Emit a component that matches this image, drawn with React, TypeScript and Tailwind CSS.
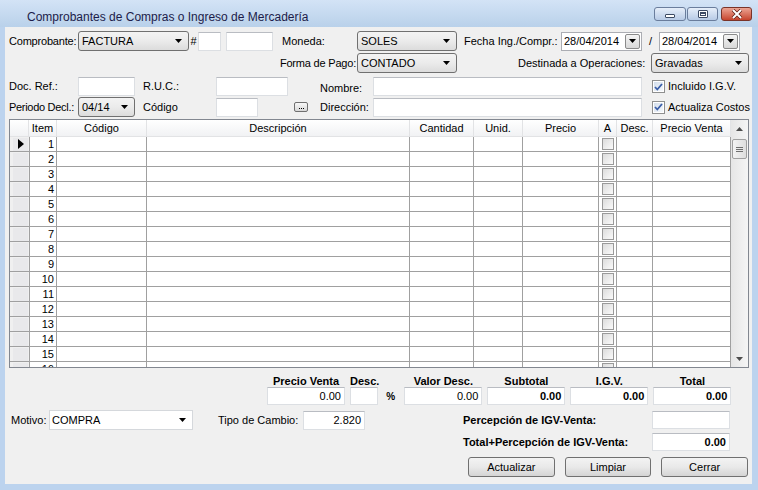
import React from 'react';

const Arrow = ({ up = false, color = '#000' }: { up?: boolean; color?: string }) => (
  <svg width="7" height="4" viewBox="0 0 7 4">
    <path d={up ? 'M0 4h7L3.5 0z' : 'M0 0h7L3.5 4z'} fill={color} />
  </svg>
);

const Combo = ({ value, className = '' }: { value: string; className?: string }) => (
  <div
    className={`h-[20px] rounded-[3px] border border-[#707070] bg-linear-to-b from-[#f3f3f3] via-[#ebebeb] to-[#dcdcdc] flex items-center pl-[3px] pr-[6px] ${className}`}
  >
    <span className="flex-1 text-[11px] leading-none">{value}</span>
    <Arrow />
  </div>
);

const Field = ({
  value = '',
  bold = false,
  className = '',
}: {
  value?: string;
  bold?: boolean;
  className?: string;
}) => (
  <div
    className={`bg-white border border-[#dcdfe3] border-t-[#b9bcc2] flex items-center justify-end pr-[3px] text-[11px] leading-none ${
      bold ? 'font-bold' : ''
    } ${className}`}
  >
    {value}
  </div>
);

const DateBox = ({ value }: { value: string }) => (
  <div className="w-[81px] h-[19px] border border-[#abadb3] bg-white flex items-center">
    <span className="flex-1 pl-[2px] text-[11px] leading-none">{value}</span>
    <div className="w-[15px] h-[15px] mr-[1px] border border-[#8a8a8a] rounded-[2px] bg-linear-to-b from-[#f4f4f4] to-[#d8d8d8] flex items-center justify-center">
      <Arrow />
    </div>
  </div>
);

const Check = ({ checked = true }: { checked?: boolean }) => (
  <div className="w-[13px] h-[13px] border border-[#8e8f8f] bg-white p-[1px]">
    <div className="w-full h-full bg-linear-to-br from-[#d3deec] to-[#f5f8fb] flex items-center justify-center">
      {checked && (
        <svg width="9" height="8" viewBox="0 0 9 8">
          <path d="M1 4l2.3 2.5L8 1" stroke="#3a5ea8" strokeWidth="1.8" fill="none" />
        </svg>
      )}
    </div>
  </div>
);

const CellCheck = () => (
  <div className="w-[12px] h-[12px] border border-[#9a9a9a] bg-linear-to-br from-[#dcdcdc] to-[#fbfbfb]" />
);

const Btn = ({ label }: { label: string }) => (
  <div className="w-[87px] h-[20px] rounded-[3px] border border-[#707070] bg-linear-to-b from-[#f3f3f3] via-[#e9e9e9] to-[#d4d4d4] flex items-center justify-center text-[11px]">
    {label}
  </div>
);

const columns = [
  { key: 'item', label: 'Item', w: 'w-[28px]' },
  { key: 'cod', label: 'Código', w: 'w-[90px]' },
  { key: 'desc', label: 'Descripción', w: 'w-[263px]' },
  { key: 'cant', label: 'Cantidad', w: 'w-[64px]' },
  { key: 'unid', label: 'Unid.', w: 'w-[49px]' },
  { key: 'precio', label: 'Precio', w: 'w-[76px]' },
  { key: 'a', label: 'A', w: 'w-[18px]' },
  { key: 'dsc', label: 'Desc.', w: 'w-[36px]' },
  { key: 'pv', label: 'Precio Venta', w: 'w-[78px]' },
];

const rows = Array.from({ length: 16 }, (_, i) => i + 1);

const totals = [
  { label: 'Precio Venta', value: '0.00', w: 'w-[78px]', bold: false },
  { label: 'Desc.', value: '', w: 'w-[28px]', bold: false },
];

const totals2 = [
  { label: 'Valor Desc.', value: '0.00', bold: false },
  { label: 'Subtotal', value: '0.00', bold: true },
  { label: 'I.G.V.', value: '0.00', bold: true },
  { label: 'Total', value: '0.00', bold: true },
];

export default function App() {
  return (
    <div className="w-[758px] h-[490px] bg-[#bcd3ee] flex flex-col font-['Liberation_Sans',Arial,sans-serif] text-black overflow-hidden">
      {/* title bar */}
      <div className="h-[27px] flex bg-linear-to-b from-[#d3e3f6] to-[#b9d1ea]">
        <div className="pl-[27px] pt-[8px] text-[12px] text-[#1c1c4a]">
          Comprobantes de Compras o Ingreso de Mercadería
        </div>
        <div className="ml-auto mr-[6px] mt-[7px] flex gap-[1px] h-[14px]">
          <div className="w-[32px] rounded-[3px] border border-[#6a7d9c] bg-linear-to-b from-[#e6eef9] to-[#b8cbe6] flex items-end justify-center pb-[2px]">
            <div className="w-[10px] h-[4px] border border-[#3c4a63] bg-white rounded-[1px]" />
          </div>
          <div className="w-[31px] rounded-[3px] border border-[#6a7d9c] bg-linear-to-b from-[#e6eef9] to-[#b8cbe6] flex items-center justify-center">
            <div className="w-[10px] h-[8px] border border-[#3c4a63] bg-white rounded-[1px] p-[1px]">
              <div className="w-full h-full border border-[#3c4a63] border-t-2" />
            </div>
          </div>
          <div className="w-[31px] ml-[2px] rounded-[3px] border border-[#7a3328] bg-linear-to-b from-[#eba393] to-[#c5432d] flex items-center justify-center">
            <svg width="12" height="10" viewBox="0 0 12 10">
              <path d="M2 1l8 8M10 1l-8 8" stroke="#5a1a10" strokeWidth="3.4" />
              <path d="M2 1l8 8M10 1l-8 8" stroke="#fff" strokeWidth="2" />
            </svg>
          </div>
        </div>
      </div>

      {/* client area */}
      <div className="flex-1 ml-[5px] mr-[6px] mb-[6px] bg-[#f0f0f0] px-[4px] text-[11px] whitespace-nowrap flex flex-col">
        {/* row 1 */}
        <div className="mt-[4px] h-[20px] flex items-center *:shrink-0">
          <span className="w-[69px] tracking-[-0.2px]">Comprobante:</span>
          <Combo value="FACTURA" className="w-[111px]" />
          <span className="w-[9px] text-center">#</span>
          <Field className="w-[23px] h-[19px]" />
          <Field className="w-[47px] h-[19px] ml-[5px]" />
          <span className="ml-[9px] w-[75px]">Moneda:</span>
          <Combo value="SOLES" className="w-[100px]" />
          <span className="ml-[7px] w-[97px]">Fecha Ing./Compr.:</span>
          <DateBox value="28/04/2014" />
          <span className="w-[17px] text-center">/</span>
          <DateBox value="28/04/2014" />
        </div>

        {/* row 2 */}
        <div className="mt-[2px] h-[20px] flex items-center *:shrink-0">
          <span className="ml-[268px] w-[80px] text-right pr-[1px] tracking-[-0.2px]">Forma de Pago:</span>
          <Combo value="CONTADO" className="w-[100px]" />
          <span className="ml-[61px] w-[133px]">Destinada a Operaciones:</span>
          <Combo value="Gravadas" className="w-[98px]" />
        </div>

        {/* row 3 */}
        <div className="mt-[4px] h-[19px] flex items-center *:shrink-0">
          <span className="w-[69px]">Doc. Ref.:</span>
          <Field className="w-[57px] h-[19px]" />
          <span className="ml-[8px] w-[73px]">R.U.C.:</span>
          <Field className="w-[72px] h-[19px]" />
          <span className="ml-[32px] w-[53px] pt-[4px]">Nombre:</span>
          <Field className="w-[269px] h-[19px]" />
          <div className="ml-[10px]">
            <Check />
          </div>
          <span className="ml-[3px]">Incluido I.G.V.</span>
        </div>

        {/* row 4 */}
        <div className="mt-[1px] h-[20px] flex items-center *:shrink-0">
          <span className="w-[69px] tracking-[-0.3px]">Periodo Decl.:</span>
          <Combo value="04/14" className="w-[57px]" />
          <span className="ml-[8px] w-[73px]">Código</span>
          <Field className="w-[42px] h-[19px]" />
          <div className="ml-[36px] w-[14px] h-[10px] rounded-[2px] border border-[#707070] bg-linear-to-b from-[#f8f8f8] to-[#d8d8d8] flex items-end justify-center gap-[1px] pb-[2px]">
            <div className="w-px h-px bg-black" />
            <div className="w-px h-px bg-black" />
            <div className="w-px h-px bg-black" />
          </div>
          <span className="ml-[12px] w-[53px]">Dirección:</span>
          <Field className="w-[269px] h-[19px]" />
          <div className="ml-[10px]">
            <Check />
          </div>
          <span className="ml-[3px]">Actualiza Costos</span>
        </div>

        {/* grid */}
        <div className="mt-[2px] w-[740px] h-[249px] border border-[#828790] bg-white flex">
          <div className="w-[721px] overflow-hidden">
            <div className="h-[17px] flex bg-linear-to-b from-[#ffffff] to-[#f1f2f4] border-b border-[#e2e3e5]">
              <div className="w-[19px] border-r border-[#e2e3e5]" />
              {columns.map((c) => (
                <div
                  key={c.key}
                  className={`${c.w} shrink-0 border-r border-[#e2e3e5] text-center leading-[17px]`}
                >
                  {c.label}
                </div>
              ))}
            </div>
            {rows.map((r) => (
              <div key={r} className="h-[15px] flex border-b border-[#a0a0a0]">
                <div className="w-[19px] shrink-0 bg-[#f0f0f0] flex items-center justify-center pl-[2px]">
                  <div className="w-[15px] h-[13px] bg-[#e9e9eb] flex items-center justify-center">
                    {r === 1 && (
                      <svg width="6" height="10" viewBox="0 0 6 10">
                        <path d="M0 0l6 5-6 5z" fill="#000" />
                      </svg>
                    )}
                  </div>
                </div>
                {columns.map((c) => (
                  <div
                    key={c.key}
                    className={`${c.w} shrink-0 border-r border-[#a0a0a0] flex items-center ${
                      c.key === 'item' ? 'justify-end pr-[2px] border-l' : 'justify-center'
                    }`}
                  >
                    {c.key === 'item' && r}
                    {c.key === 'a' && <CellCheck />}
                  </div>
                ))}
              </div>
            ))}
          </div>
          {/* scrollbar */}
          <div className="w-[17px] bg-linear-to-r from-[#e6e6e6] to-[#f5f5f5] flex flex-col items-center">
            <div className="h-[17px] flex items-center justify-center">
              <Arrow up color="#4d4d4d" />
            </div>
            <div className="mt-[2px] w-[15px] h-[20px] rounded-[2px] border border-[#a0a0a0] bg-linear-to-r from-[#f3f3f3] to-[#dedede] flex flex-col items-center justify-center gap-[1px]">
              <div className="w-[7px] h-px bg-[#6f6f6f]" />
              <div className="w-[7px] h-px bg-[#6f6f6f]" />
              <div className="w-[7px] h-px bg-[#6f6f6f]" />
            </div>
            <div className="flex-1" />
            <div className="h-[17px] flex items-center justify-center">
              <Arrow color="#4d4d4d" />
            </div>
          </div>
        </div>

        {/* totals */}
        <div className="mt-[7px] flex ml-[258px]">
          {totals.map((t, i) => (
            <div key={t.label} className={`flex flex-col ${i > 0 ? 'ml-[5px]' : ''}`}>
              <div className="h-[12px] leading-[12px] font-bold text-center">{t.label}</div>
              <Field value={t.value} className={`${t.w} h-[18px]`} />
            </div>
          ))}
          <div className="w-[25px] flex items-end pb-[1px] pl-[7px] font-bold text-[10px]">%</div>
          {totals2.map((t, i) => (
            <div key={t.label} className={`flex flex-col ${i > 0 ? 'ml-[5px]' : ''}`}>
              <div className="h-[12px] leading-[12px] font-bold text-center">{t.label}</div>
              <Field value={t.value} bold={t.bold} className="w-[78px] h-[18px]" />
            </div>
          ))}
        </div>

        {/* motivo / percepcion */}
        <div className="mt-[5px] h-[20px] flex items-center *:shrink-0">
          <span className="ml-[2px] w-[38px]">Motivo:</span>
          <div className="w-[144px] h-[20px] bg-white border border-[#d5d8dc] flex items-center pl-[2px] pr-[6px]">
            <span className="flex-1">COMPRA</span>
            <Arrow />
          </div>
          <span className="ml-[25px] w-[85px]">Tipo de Cambio:</span>
          <Field value="2.820" className="w-[62px] h-[19px] text-[11px]" />
          <span className="ml-[98px] w-[189px] font-bold">Percepción de IGV-Venta:</span>
          <Field className="w-[78px] h-[18px]" />
        </div>

        <div className="mt-[3px] h-[18px] flex items-center *:shrink-0">
          <span className="ml-[454px] w-[189px] font-bold">Total+Percepción de IGV-Venta:</span>
          <Field value="0.00" bold className="w-[78px] h-[18px]" />
        </div>

        <div className="mt-[6px] flex gap-[10px] ml-[459px]">
          <Btn label="Actualizar" />
          <Btn label="Limpiar" />
          <Btn label="Cerrar" />
        </div>
      </div>
    </div>
  );
}
